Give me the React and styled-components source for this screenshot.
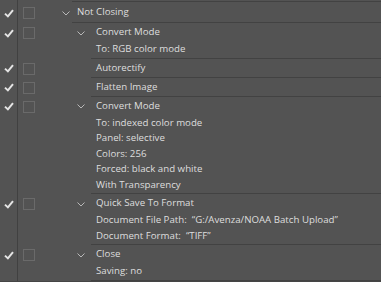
import React from "react";
import styled, { createGlobalStyle } from "styled-components";

const GlobalStyle = createGlobalStyle`
html, body {
    margin: 0;
    padding: 0;
    background: #454545;
}
body {
    font-family: "Open Sans", "Noto Sans", sans-serif;
    font-size: 9.7px;
    color: #dedede;
    -webkit-font-smoothing: antialiased;
}
`;

const actions = [
    { title: "Convert Mode", params: ["To: RGB color mode"] },
    { title: "Autorectify", params: [] },
    { title: "Flatten Image", params: [] },
    {
        title: "Convert Mode",
        params: [
            "To: indexed color mode",
            "Panel: selective",
            "Colors: 256",
            "Forced: black and white",
            "With Transparency",
        ],
    },
    {
        title: "Quick Save To Format",
        params: [
            "Document File Path:  \u201CG:/Avenza/NOAA Batch Upload\u201D",
            "Document Format:  \u201CTIFF\u201D",
        ],
    },
    { title: "Close", params: ["Saving: no"] },
];

const Check = () => (
    <svg width="10" height="9" viewBox="0 0 10 9">
        <path d="M1 4.6 L3.9 7.4 L9 1.2" fill="none" stroke="#e4e4e4" strokeWidth="2" />
    </svg>
);

const Chevron = () => (
    <svg width="8" height="5" viewBox="0 0 8 5">
        <polyline points="0.5,0.5 4,4 7.5,0.5" fill="none" stroke="#b8b8b8" strokeWidth="1" />
    </svg>
);

const ActionRow = ({ set, title, params = [], open, checked = true }) => (
    <Row>
        <CheckCell $h={set ? 20 : 18}>{checked && <Check />}</CheckCell>
        <BoxCell $h={set ? 20 : 18}>{checked && <Box />}</BoxCell>
        <ToggleCell $set={set} $h={set ? 20 : 18}>{open && <Chevron />}</ToggleCell>
        <Body $params={params.length > 0}>
            <Title $h={set ? 20 : 18}>{title}</Title>
            {params.map((p, i) => (
                <Param key={i}>{p}</Param>
            ))}
        </Body>
    </Row>
);

const App = () => {
    return (
        <>
            <GlobalStyle />
            <Panel>
                <Row>
                    <CheckCell $h={1} />
                    <BoxCell $h={1} />
                    <ToggleCell $set $h={1} />
                    <Body />
                </Row>
                <ActionRow set open title="Not Closing" />
                {actions.map((a, i) => (
                    <ActionRow key={i} open={a.params.length > 0} title={a.title} params={a.params} />
                ))}
            </Panel>
        </>
    );
};
export default App;

const Panel = styled.div`
width: 381px;
background: #535353;
display: flex;
flex-direction: column;
`;

const Row = styled.div`
display: flex;
align-items: stretch;
`;

const CheckCell = styled.div`
width: 18px;
flex: none;
border-right: 1px solid #414141;
display: flex;
justify-content: center;
align-items: flex-start;
padding-top: ${p => (p.$h - 9) / 2 + 1}px;
box-sizing: border-box;
padding-left: 1px;
min-height: ${p => p.$h + 1}px;
`;

const BoxCell = styled.div`
width: 36px;
flex: none;
padding-left: 5px;
padding-top: ${p => (p.$h - 12) / 2 + 1}px;
box-sizing: border-box;
`;

const Box = styled.div`
width: 12px;
height: 12px;
box-sizing: border-box;
border: 1px solid #6a6a6a;
`;

const ToggleCell = styled.div`
width: ${p => (p.$set ? 18 : 37)}px;
flex: none;
padding-left: ${p => (p.$set ? 8 : 23)}px;
padding-top: ${p => (p.$h - 5) / 2 + 1}px;
box-sizing: border-box;
svg { display: block; }
`;

const Body = styled.div`
flex: 1;
padding-left: 5px;
padding-bottom: ${p => (p.$params ? 1 : 0)}px;
border-bottom: 1px solid #424242;
min-width: 0;
`;

const Title = styled.div`
height: ${p => p.$h}px;
line-height: ${p => p.$h}px;
white-space: pre;
`;

const Param = styled.div`
height: 15.5px;
line-height: 15.5px;
white-space: pre;
`;
